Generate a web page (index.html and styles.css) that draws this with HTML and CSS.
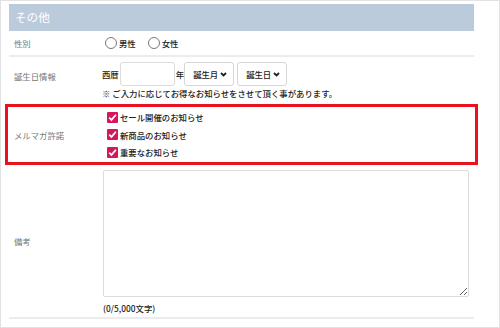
FILE: index.html
```html
<!DOCTYPE html>
<html lang="ja">
<head>
<meta charset="utf-8">
<link rel="stylesheet" href="styles.css">
</head>
<body>
<div class="frame">
  <div class="section">
    <div class="heading">その他</div>
    <div class="row row-gender">
      <div class="label">性別</div>
      <div class="value radios">
        <label class="radio"><span class="circle"></span>男性</label>
        <label class="radio"><span class="circle"></span>女性</label>
      </div>
    </div>
    <div class="row row-birth">
      <div class="label">誕生日情報</div>
      <div class="value">
        <div class="birth-line">
          <span>西暦</span>
          <input class="year" type="text">
          <span class="nen">年</span>
          <div class="select"><span>誕生月</span><svg width="7" height="5" viewBox="0 0 7 5"><path d="M1 1 L3.5 3.5 L6 1" fill="none" stroke="#222" stroke-width="1.8"/></svg></div>
          <div class="select"><span>誕生日</span><svg width="7" height="5" viewBox="0 0 7 5"><path d="M1 1 L3.5 3.5 L6 1" fill="none" stroke="#222" stroke-width="1.8"/></svg></div>
        </div>
        <div class="note">※ ご入力に応じてお得なお知らせをさせて頂く事があります。</div>
      </div>
    </div>
    <div class="row row-mail">
      <div class="label">メルマガ許諾</div>
      <div class="value checks">
        <label class="check"><span class="box"><svg width="11" height="11" viewBox="0 0 11 11"><path d="M2.2 5.6 L4.5 7.9 L8.9 2.8" fill="none" stroke="#fff" stroke-width="1.7"/></svg></span>セール開催のお知らせ</label>
        <label class="check"><span class="box"><svg width="11" height="11" viewBox="0 0 11 11"><path d="M2.2 5.6 L4.5 7.9 L8.9 2.8" fill="none" stroke="#fff" stroke-width="1.7"/></svg></span>新商品のお知らせ</label>
        <label class="check"><span class="box"><svg width="11" height="11" viewBox="0 0 11 11"><path d="M2.2 5.6 L4.5 7.9 L8.9 2.8" fill="none" stroke="#fff" stroke-width="1.7"/></svg></span>重要なお知らせ</label>
      </div>
    </div>
    <div class="row row-note">
      <div class="label">備考</div>
      <div class="value">
        <textarea class="memo"></textarea>
        <div class="count">(0/5,000文字)</div>
      </div>
    </div>
  </div>
</div>
</body>
</html>
```

FILE: styles.css
```css
html, body {
  margin: 0;
  padding: 0;
  background: #fff;
}
body {
  font-family: "Noto Sans CJK JP", "Noto Sans", sans-serif;
  font-size: 8.4px;
  color: #222;
}
.frame {
  border: 1px solid #e2e2e2;
  padding: 3px 0 0 8px;
  width: 490px;
  height: 323px;
}
.section {
  width: 465px;
}
.heading {
  height: 27px;
  background: #bccbdb;
  color: #fff;
  font-size: 11.6px;
  line-height: 27px;
  padding-left: 6px;
}
.row {
  display: flex;
  border-bottom: 2px solid #ececec;
}
.label {
  width: 88px;
  padding-left: 5px;
  color: #777;
  display: flex;
  align-items: center;
  flex: none;
}
.value {
  flex: 1;
  font-weight: 500;
}
.row-gender {
  height: 24px;
}
.radios {
  display: flex;
  align-items: center;
  gap: 12px;
  padding-left: 3px;
}
.radio {
  display: flex;
  align-items: center;
  gap: 2px;
}
.circle {
  width: 10px;
  height: 10px;
  border: 1px solid #777;
  border-radius: 50%;
  background: #fff;
}
.row-birth {
  height: 45px;
  border-bottom-width: 0;
}
.row-birth .label {
  align-items: flex-start;
  padding-top: 13px;
}
.birth-line {
  display: flex;
  align-items: center;
  margin-top: 5px;
  height: 24px;
}
.year {
  width: 55px;
  height: 24px;
  box-sizing: border-box;
  border: 1px solid #dcdcdc;
  border-radius: 3px;
  margin: 0 0 0 1px;
  padding: 0;
}
.nen {
  margin-left: 1px;
}
.select {
  width: 50px;
  height: 24px;
  box-sizing: border-box;
  border: 1px solid #d6d6d6;
  border-radius: 3px;
  display: flex;
  align-items: center;
  justify-content: space-between;
  padding: 0 6px 0 8px;
  margin-left: 3px;
}
.nen + .select {
  margin-left: 0;
}
.note {
  margin-top: 1px;
  line-height: 12px;
}
.row-mail {
  margin: 2px -4px 0 -4px;
  border: 3px solid #e8111d;
  height: 55px;
}
.row-mail .label {
  width: 89px;
  padding-left: 6px;
}
.checks {
  display: flex;
  flex-direction: column;
  justify-content: center;
  gap: 5.5px;
  padding-left: 4px;
}
.check {
  display: flex;
  align-items: center;
  gap: 2px;
  line-height: 12px;
}
.box {
  width: 11px;
  height: 11px;
  background: #d5185e;
  border-radius: 1px;
  display: flex;
}
.row-note {
  height: 152px;
}
.row-note .value {
  padding-top: 5px;
}
.memo {
  display: block;
  width: 366px;
  height: 127px;
  box-sizing: border-box;
  border: 1px solid #dcdcdc;
  border-radius: 2px;
  margin: 0 0 0 1px;
  padding: 0;
  resize: both;
}
.count {
  margin-top: 5px;
  padding-left: 1px;
  line-height: 12px;
}
```
